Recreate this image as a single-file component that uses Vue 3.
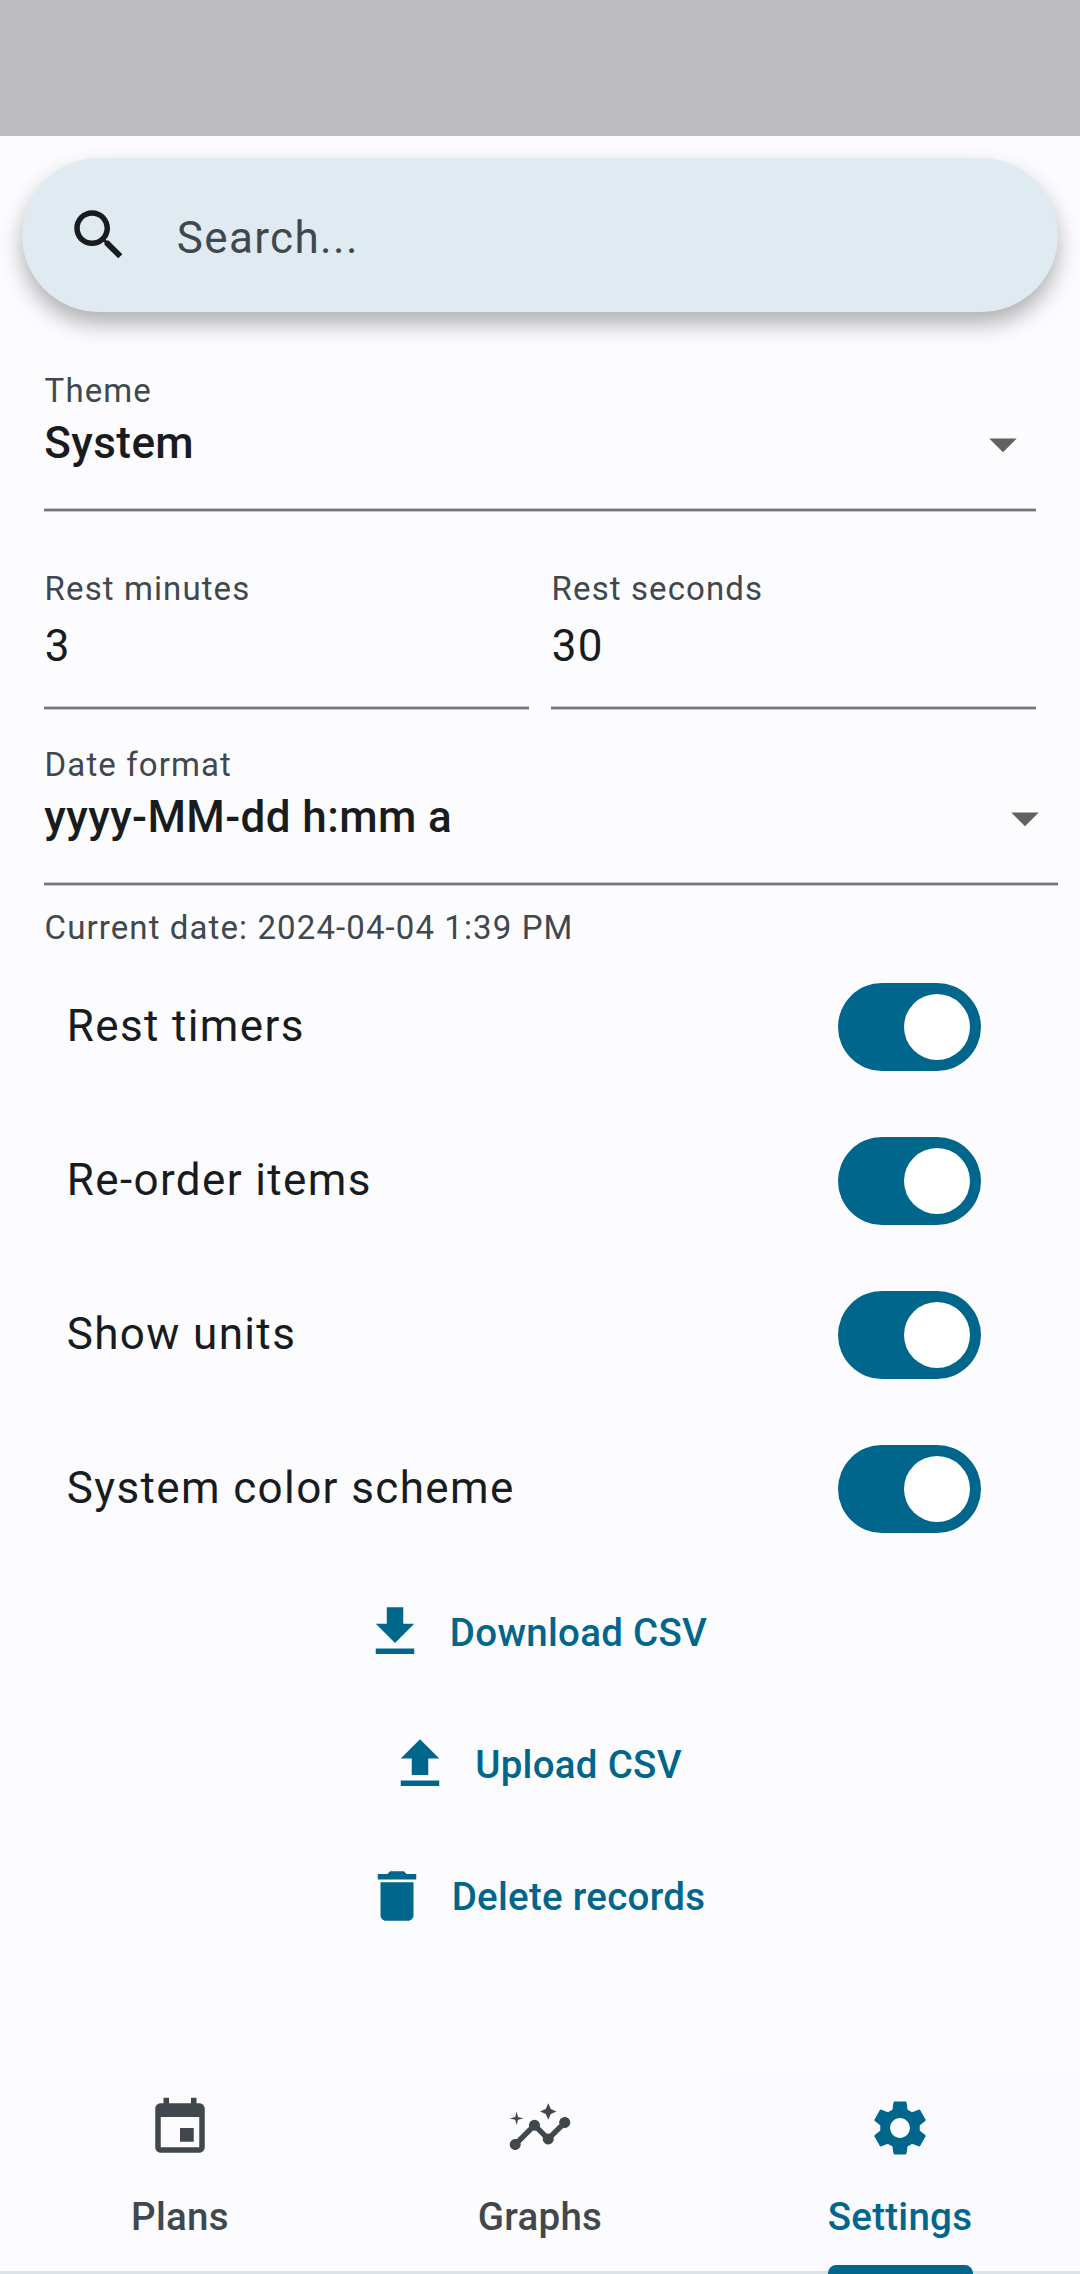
<script setup>
import { ref } from 'vue'

const minutes = ref('3')
const seconds = ref('30')

const toggles = ref([
  { label: 'Rest timers', on: true },
  { label: 'Re-order items', on: true },
  { label: 'Show units', on: true },
  { label: 'System color scheme', on: true },
])

const actions = [
  { label: 'Download CSV', icon: 'M19 9h-4V3H9v6H5l7 7 7-7zM5 18v2h14v-2H5z' },
  { label: 'Upload CSV', icon: 'M9 16h6v-6h4l-7-7-7 7h4v6zm-4 2h14v2H5v-2z' },
  {
    label: 'Delete records',
    icon: 'M6 19c0 1.1.9 2 2 2h8c1.1 0 2-.9 2-2V7H6v12zM19 4h-3.5l-1-1h-5l-1 1H5v2h14V4z',
  },
]

const tabs = [
  {
    label: 'Plans',
    icon: 'M17 12h-5v5h5v-5zM16 1v2H8V1H6v2H5c-1.11 0-1.99.9-1.99 2L3 19c0 1.1.89 2 2 2h14c1.1 0 2-.9 2-2V5c0-1.1-.9-2-2-2h-1V1h-2zm3 18H5V8h14v11z',
  },
  {
    label: 'Graphs',
    icon: 'M21 8c-1.45 0-2.26 1.44-1.93 2.51l-3.55 3.56c-.3-.09-.74-.09-1.04 0l-2.55-2.55C12.27 10.45 11.46 9 10 9c-1.45 0-2.27 1.44-1.93 2.52l-4.56 4.55C2.44 15.74 1 16.55 1 18c0 1.1.9 2 2 2 1.45 0 2.26-1.44 1.93-2.51l4.55-4.56c.3.09.74.09 1.04 0l2.55 2.55C12.73 16.55 13.54 18 15 18c1.45 0 2.27-1.44 1.93-2.52l3.56-3.55C21.56 12.26 23 11.45 23 10c0-1.1-.9-2-2-2zM15 9l.94-2.07L18 6l-2.06-.93L15 3l-.92 2.07L12 6l2.08.93L15 9zM3.5 11L4 9l2-.5L4 8l-.5-2L3 8l-2 .5L3 9l.5 2z',
  },
  {
    label: 'Settings',
    active: true,
    icon: 'M19.14 12.94c.04-.3.06-.61.06-.94 0-.32-.02-.64-.07-.94l2.03-1.58c.18-.14.23-.41.12-.61l-1.92-3.32c-.12-.22-.37-.29-.59-.22l-2.39.96c-.5-.38-1.03-.7-1.62-.94l-.36-2.54c-.04-.24-.24-.41-.48-.41h-3.84c-.24 0-.43.17-.47.41l-.36 2.54c-.59.24-1.13.57-1.62.94l-2.39-.96c-.22-.08-.47 0-.59.22L2.74 8.87c-.12.21-.08.47.12.61l2.03 1.58c-.05.3-.09.63-.09.94s.02.64.07.94l-2.03 1.58c-.18.14-.23.41-.12.61l1.92 3.32c.12.22.37.29.59.22l2.39-.96c.5.38 1.03.7 1.62.94l.36 2.54c.05.24.24.41.48.41h3.84c.24 0 .44-.17.47-.41l.36-2.54c.59-.24 1.13-.56 1.62-.94l2.39.96c.22.08.47 0 .59-.22l1.92-3.32c.12-.22.07-.47-.12-.61l-2.01-1.58zM12 15.6c-1.98 0-3.6-1.62-3.6-3.6s1.62-3.6 3.6-3.6 3.6 1.62 3.6 3.6-1.62 3.6-3.6 3.6z',
  },
]
</script>

<template>
  <div class="screen">
    <div class="status-bar"></div>

    <div class="search">
      <svg class="icon" viewBox="0 0 24 24">
        <path d="M15.5 14h-.79l-.28-.27C15.41 12.59 16 11.11 16 9.5 16 5.91 13.09 3 9.5 3S3 5.91 3 9.5 5.91 16 9.5 16c1.61 0 3.09-.59 4.23-1.57l.27.28v.79l5 4.99L20.49 19l-4.99-5zm-6 0C7.01 14 5 11.99 5 9.5S7.01 5 9.5 5 14 7.01 14 9.5 11.99 14 9.5 14z" />
      </svg>
      <span class="search-hint">Search...</span>
    </div>

    <main class="content">
      <section class="field theme">
        <div class="label">Theme</div>
        <div class="select">
          <span>System</span>
          <svg class="icon arrow" viewBox="0 0 24 24"><path d="M7 10l5 5 5-5z" /></svg>
        </div>
        <div class="underline"></div>
      </section>

      <div class="pair">
        <section class="field">
          <div class="label">Rest minutes</div>
          <div class="value">{{ minutes }}</div>
          <div class="underline"></div>
        </section>
        <section class="field">
          <div class="label">Rest seconds</div>
          <div class="value">{{ seconds }}</div>
          <div class="underline"></div>
        </section>
      </div>

      <section class="field date">
        <div class="label">Date format</div>
        <div class="select">
          <span>yyyy-MM-dd h:mm a</span>
          <svg class="icon arrow" viewBox="0 0 24 24"><path d="M7 10l5 5 5-5z" /></svg>
        </div>
        <div class="underline"></div>
        <div class="label helper">Current date: 2024-04-04 1:39 PM</div>
      </section>

      <div class="toggles">
        <div v-for="t in toggles" :key="t.label" class="toggle-row" @click="t.on = !t.on">
          <span class="toggle-label">{{ t.label }}</span>
          <span class="switch" :class="{ on: t.on }"><span class="thumb"></span></span>
        </div>
      </div>

      <div class="actions">
        <div v-for="a in actions" :key="a.label" class="action">
          <svg class="icon" viewBox="0 0 24 24"><path :d="a.icon" /></svg>
          <span>{{ a.label }}</span>
        </div>
      </div>
    </main>

    <nav class="tabs">
      <div v-for="tab in tabs" :key="tab.label" class="tab" :class="{ active: tab.active }">
        <svg class="icon" viewBox="0 0 24 24"><path :d="tab.icon" /></svg>
        <span class="tab-label">{{ tab.label }}<i v-if="tab.active" class="indicator"></i></span>
      </div>
    </nav>
  </div>
</template>

<style>
body {
  background: #fcfcff;
}
</style>

<style scoped>
.screen {
  display: flex;
  flex-direction: column;
  width: 1080px;
  height: 2274px;
  overflow: hidden;
  background: #fcfcff;
  color: #191c1e;
  font-family: Roboto, sans-serif;
  font-size: 44px;
  white-space: nowrap;
}
.status-bar {
  flex: none;
  height: 136px;
  background: #bdbdbf;
}
.icon {
  display: block;
  flex: none;
  width: 66px;
  height: 66px;
  fill: currentColor;
}
.search {
  display: flex;
  flex: none;
  align-items: center;
  gap: 44px;
  height: 154px;
  margin: 22px 22px 0;
  padding: 0 44px;
  box-sizing: border-box;
  border-radius: 77px;
  background: #e0ebf1;
  box-shadow: 0 12px 22px rgba(0, 0, 0, 0.3);
}
.search-hint {
  padding: 6px 0 0 0.7px;
  color: #41484d;
  letter-spacing: 1.375px;
}
.content {
  flex: 1;
}
.theme {
  margin: 59px 44px 0;
}
.label {
  height: 39px;
  padding-left: 0.6px;
  color: #41484d;
  font-size: 33px;
  line-height: 39px;
  letter-spacing: 1.1px;
}
.select {
  display: flex;
  align-items: center;
  justify-content: space-between;
  height: 66px;
  margin-bottom: 32px;
  padding-left: 0.25px;
  font-weight: 500;
  letter-spacing: 0.41px;
}
.arrow {
  margin-top: 1.4px;
  color: #616161;
}
.underline {
  height: 4px;
  background: linear-gradient(#c3c7cb 1px, #71787d 1px 3px, #c3c7cb 3px);
}
.pair {
  display: flex;
  gap: 22px;
  margin: 57px 44px 0;
}
.pair .field {
  flex: 1;
}
.value {
  height: 52px;
  margin: 12px 0 34px;
  padding-left: 0.7px;
  line-height: 52px;
  letter-spacing: 1.375px;
}
.date {
  margin: 35px 22px 0 44px;
}
.helper {
  margin-top: 22px;
}
.toggles {
  margin-top: 3px;
}
.toggle-row {
  display: flex;
  align-items: center;
  justify-content: space-between;
  height: 154px;
  padding: 0 99px 0 66.7px;
}
.toggle-label {
  padding-bottom: 2px;
  letter-spacing: 1.375px;
}
.switch {
  display: flex;
  width: 143px;
  height: 88px;
  padding: 11px;
  box-sizing: border-box;
  border-radius: 44px;
  background: #71787d;
}
.switch.on {
  justify-content: flex-end;
  background: #00668b;
}
.thumb {
  width: 66px;
  height: 66px;
  border-radius: 50%;
  background: #fff;
}
.action {
  display: flex;
  align-items: center;
  justify-content: center;
  gap: 22px;
  height: 132px;
  padding-right: 11px;
  color: #00668b;
  font-size: 38.5px;
  font-weight: 500;
  letter-spacing: 0.275px;
}
.tabs {
  display: flex;
  flex: none;
  height: 204px;
  box-sizing: border-box;
  border-bottom: 3px solid #dce3e9;
}
.tab {
  display: flex;
  flex: 1;
  flex-direction: column;
  align-items: center;
  padding-top: 24.6px;
  color: #41484d;
}
.tab.active {
  background: #fafaff;
  color: #00668b;
}
.tab-label {
  position: relative;
  margin-top: 33.4px;
  font-size: 38.5px;
  font-weight: 500;
  line-height: 46px;
  letter-spacing: 0.275px;
}
.indicator {
  position: absolute;
  right: -0.5px;
  bottom: -34px;
  left: 0;
  height: 8.5px;
  border-radius: 8.25px 8.25px 0 0;
  background: #00668b;
}
</style>
